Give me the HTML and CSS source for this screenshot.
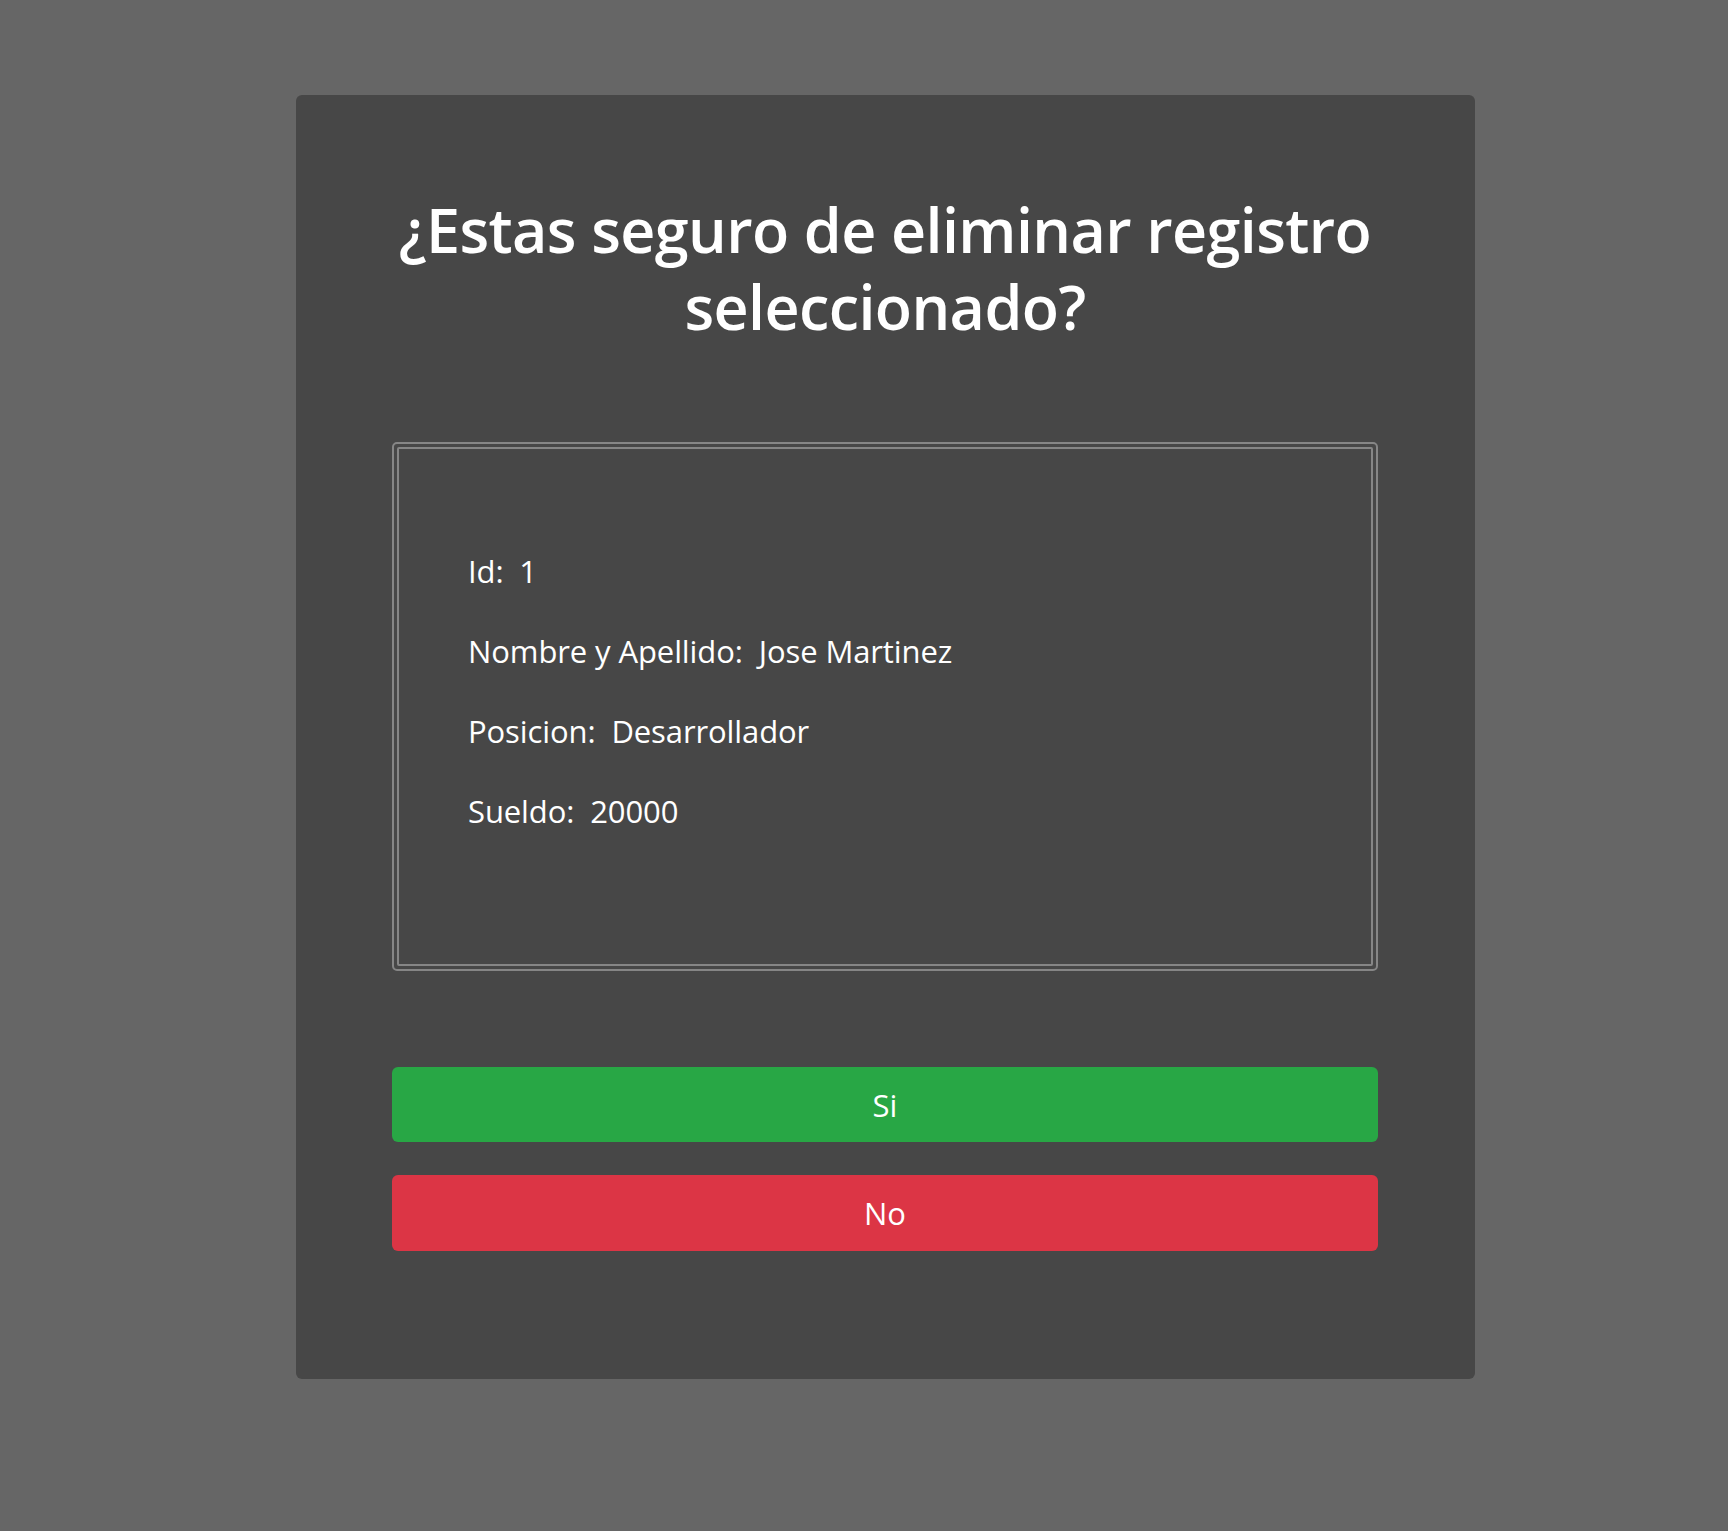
FILE: index.html
```html
<!DOCTYPE html>
<html lang="es">
<head>
<meta charset="utf-8">
<title>Eliminar registro</title>
<link rel="stylesheet" href="styles.css">
</head>
<body>
  <main class="card">
    <h1 class="title">¿Estas seguro de eliminar registro seleccionado?</h1>
    <div class="frame">
      <div class="frame-inner">
        <p class="row">Id:&nbsp; 1</p>
        <p class="row">Nombre y Apellido:&nbsp; Jose Martinez</p>
        <p class="row">Posicion:&nbsp; Desarrollador</p>
        <p class="row">Sueldo:&nbsp; 20000</p>
      </div>
    </div>
    <div class="actions">
      <button class="btn btn-yes" type="button">Si</button>
      <button class="btn btn-no" type="button">No</button>
    </div>
  </main>
</body>
</html>
```
FILE: styles.css
```css
* { box-sizing: border-box; }

html, body {
  margin: 0;
  padding: 0;
}

body {
  background: #666666;
  font-family: "Open Sans", "Noto Sans", "Liberation Sans", sans-serif;
  color: #ffffff;
  min-height: 1531px;
  padding-top: 95px;
}

.card {
  width: 1179px;
  margin-left: 296px;
  background: #474747;
  border-radius: 6px;
  padding: 96px 97px 128px 96px;
}

.title {
  margin: 0 -8px 97px;
  font-size: 61px;
  font-weight: 600;
  line-height: 77px;
  text-align: center;
  letter-spacing: -0.6px;
}

.frame {
  border: 2px solid #868686;
  border-radius: 5px;
  padding: 3px;
}

.frame-inner {
  border: 2px solid #868686;
  border-radius: 2px;
  padding: 98px 60px 129px 69px;
  display: flex;
  flex-direction: column;
  gap: 32px;
}

.row {
  margin: 0;
  font-size: 31px;
  line-height: 48px;
  letter-spacing: -0.1px;
}

.actions {
  margin-top: 96px;
  display: flex;
  flex-direction: column;
  gap: 33px;
}

.btn {
  display: block;
  width: 100%;
  height: 75px;
  border: none;
  border-radius: 6px;
  color: #ffffff;
  font-family: inherit;
  font-size: 31px;
  cursor: pointer;
}

.btn-yes { background: #28a745; }
.btn-no { background: #dc3545; height: 76px; }
```
